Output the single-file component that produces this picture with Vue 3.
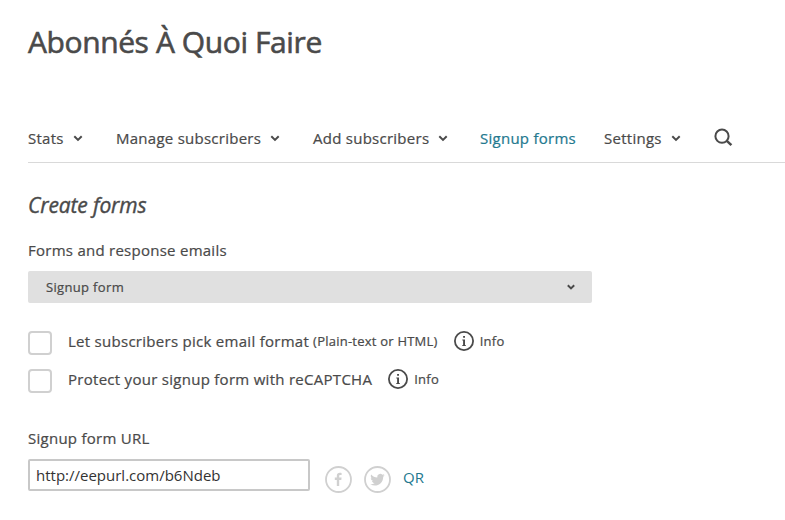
<script setup>
const tabs = [
  { label: 'Stats', menu: true },
  { label: 'Manage subscribers', menu: true },
  { label: 'Add subscribers', menu: true },
  { label: 'Signup forms', active: true },
  { label: 'Settings', menu: true },
]
const options = [
  { label: 'Let subscribers pick email format', note: '(Plain-text or HTML)' },
  { label: 'Protect your signup form with reCAPTCHA' },
]
</script>

<template>
  <main class="page">
    <h1 class="title">Abonnés À Quoi Faire</h1>

    <nav class="tabs">
      <a v-for="t in tabs" :key="t.label" class="tab" :class="{ active: t.active }">
        <span>{{ t.label }}</span>
        <svg v-if="t.menu" class="chevron" width="10" height="7" viewBox="0 0 10 7"><path d="M1.3 1.3 5 4.9 8.7 1.3" /></svg>
      </a>
      <svg class="search" width="20" height="20" viewBox="0 0 20 20"><circle cx="8" cy="8.2" r="6.6" /><path d="m12.8 12.8 4.6 4.4" /></svg>
    </nav>

    <h2 class="heading">Create forms</h2>
    <label class="label">Forms and response emails</label>
    <div class="select">
      <span>Signup form</span>
      <svg class="chevron" width="8" height="6" viewBox="0 0 8 6"><path d="M.8 1.3 4 4.4 7.2 1.3" /></svg>
    </div>

    <div class="options">
      <div v-for="o in options" :key="o.label" class="option">
        <span class="box"></span>
        <span class="text">{{ o.label }}</span>
        <span v-if="o.note" class="note">{{ o.note }}</span>
        <svg class="info-icon" width="20" height="20" viewBox="0 0 20 20">
          <circle cx="10" cy="10" r="9.1" />
          <path class="fill" d="M9.1 5H11v1.7H9.1zM8.3 8.6H11v5.5h.8v.9H8.3v-.9h.8V9.5h-.8z" />
        </svg>
        <span class="info">Info</span>
      </div>
    </div>

    <label class="label">Signup form URL</label>
    <div class="share">
      <div class="url">http://eepurl.com/b6Ndeb</div>
      <svg class="social" width="27" height="27" viewBox="0 0 27 27">
        <circle cx="13.5" cy="13.5" r="12.5" />
        <path d="M11.8 20v-6h-2v-2.4h2V9.9c0-2 1.2-3.1 3-3.1.9 0 1.6.1 1.8.1V9h-1.2c-1 0-1.2.5-1.2 1.2v1.4h2.4l-.3 2.4h-2.1v6z" />
      </svg>
      <svg class="social" width="27" height="27" viewBox="0 0 27 27">
        <circle cx="13.5" cy="13.5" r="12.5" />
        <path d="M20.7 9.2c-.5.2-1.1.4-1.7.5.6-.4 1.1-1 1.3-1.6-.6.3-1.2.6-1.9.7a3 3 0 0 0-5.1 2.7c-2.4-.1-4.6-1.3-6.1-3.1-.8 1.4-.4 3.1.9 4-.5 0-.9-.1-1.3-.4 0 1.4 1 2.7 2.4 3-.4.1-.9.1-1.3 0 .4 1.2 1.5 2.1 2.8 2.1a6 6 0 0 1-4.4 1.2c5.7 3.5 12.9-.3 12.9-7.6.6-.4 1.1-.9 1.5-1.5z" />
      </svg>
      <a class="qr">QR</a>
    </div>
  </main>
</template>

<style>
body { margin: 0; background: #fff; }
</style>

<style scoped>
.page {
  box-sizing: border-box;
  height: 520px;
  padding-left: 28px;
  overflow: hidden;
  color: #4a4a4a;
  font: 400 15px/24px "Open Sans", "Noto Sans", sans-serif;
  letter-spacing: 0.26px;
  white-space: nowrap;
  -webkit-text-stroke: 0.22px currentColor;
}
.title { margin: 0; padding-top: 22px; font-size: 30px; line-height: 40px; font-weight: 400; letter-spacing: -0.4px; -webkit-text-stroke-width: 0.6px; }
.tabs {
  display: grid;
  grid-template-columns: 88px 197px 167px 124px 110px 20px;
  align-items: center;
  height: 48px;
  margin-top: 52px;
  border-bottom: 1px solid #d9d9d9;
}
.tab { display: flex; align-items: center; gap: 9px; }
.tab.active { color: #24798f; }
.chevron { fill: none; stroke: #4a4a4a; stroke-width: 2; }
.search { fill: none; stroke: #4a4a4a; stroke-width: 2; }
.search path { stroke-width: 2.5; }
.heading { margin: 26px 0 0; font-size: 21px; line-height: 32px; font-style: italic; font-weight: 400; letter-spacing: -0.12px; -webkit-text-stroke-width: 0.4px; }
.label { display: block; margin-top: 17px; }
.select {
  display: flex;
  align-items: center;
  justify-content: space-between;
  box-sizing: border-box;
  width: 564px;
  height: 32px;
  margin-top: 9px;
  padding: 0 17px 0 18px;
  border-radius: 2px;
  background: #e0e0e0;
  font-size: 13px;
  letter-spacing: 0.34px;
}
.options { padding: 26px 0 2px; }
.option { display: flex; align-items: center; height: 24px; margin-bottom: 14px; }
.option:first-child { padding-top: 2px; }
.box { box-sizing: border-box; width: 24px; height: 24px; margin-right: 16px; border: 2px solid #d0d0d0; border-radius: 4px; }
.text { letter-spacing: 0.28px; }
.note { margin-left: 4px; font-size: 13px; letter-spacing: 0.23px; }
.text, .note, .info-icon, .info { margin-top: -4px; }
.info-icon { margin-left: 16px; fill: none; stroke: #4a4a4a; stroke-width: 1.8; }
.info-icon .fill { fill: #4a4a4a; stroke: none; }
.info { margin-left: 6px; font-size: 13px; }
.share { display: flex; align-items: flex-start; margin-top: 9px; }
.url {
  box-sizing: border-box;
  width: 282px;
  height: 32px;
  margin-right: 15px;
  padding-left: 6px;
  border: 2px solid #c8c8c8;
  border-radius: 2px;
  color: #333;
  letter-spacing: 0;
  -webkit-text-stroke-width: 0;
  line-height: 28px;
}
.social { margin: 7px 12px 0 0; fill: #d0d0d0; }
.social circle { fill: none; stroke: #d0d0d0; stroke-width: 1.8; }
.qr { margin-top: 6px; color: #24798f; letter-spacing: 0; -webkit-text-stroke-width: 0; }
</style>
